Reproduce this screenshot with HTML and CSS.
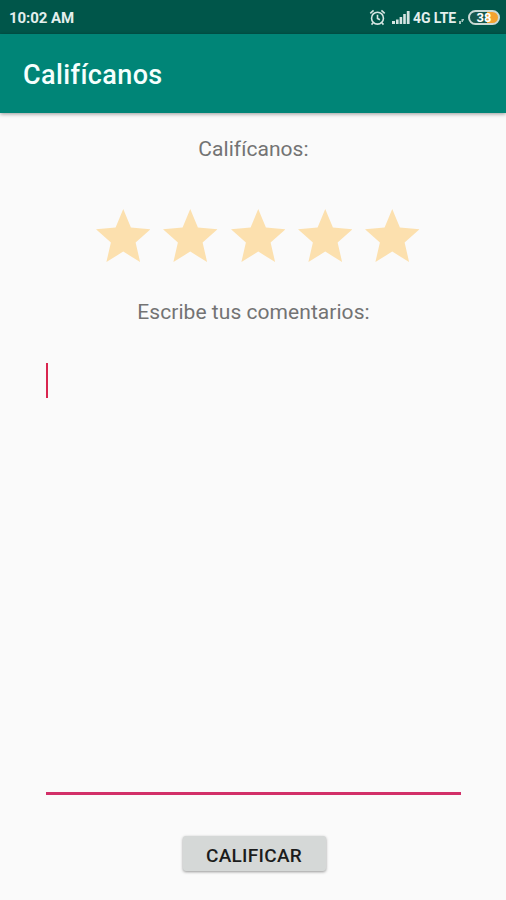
FILE: index.html
```html
<!DOCTYPE html>
<html lang="es">
<head>
<meta charset="utf-8">
<title>Califícanos</title>
<link rel="stylesheet" href="styles.css">
</head>
<body>
<svg class="defs" aria-hidden="true"><symbol id="star" viewBox="2 2 20 19" preserveAspectRatio="none"><path d="M12 17.27 18.18 21l-1.64-7.03L22 9.24l-7.19-.61L12 2 9.19 8.63 2 9.24l5.46 4.73L5.82 21z"/></symbol></svg>
<div class="screen">
  <div class="status">
    <span class="time">10:02 AM</span>
    <svg class="alarm" viewBox="0 0 16 16"><circle cx="8" cy="8.6" r="5.6"/><path d="M8 5.3v3.6l2.3 1.2M1.2 4.1 4.3 1.3M14.8 4.1l-3.1-2.8M3.8 13l-1.4 1.7M12.2 13l1.4 1.7"/></svg>
    <svg class="signal" viewBox="0 0 18 13"><path d="M0 13v-3h3v3zM4 13V8.500h2.600v4.500zM7.600 13V6h2.600v7zM11.200 13V3h2.600v10zM14.800 13V0h2.800v13z"/></svg>
    <span class="network">4G LTE</span>
    <svg class="activity" viewBox="0 0 5 5"><path d="M0 2h2v3H0zM2.500 0H5v1.500H4V3H2.500z"/></svg>
    <div class="battery"><span>38</span></div>
  </div>
  <header class="appbar"><h1>Califícanos</h1></header>
  <main>
    <p class="label rate-label">Califícanos:</p>
    <div class="stars">
      <svg><use href="#star"/></svg>
      <svg><use href="#star"/></svg>
      <svg><use href="#star"/></svg>
      <svg><use href="#star"/></svg>
      <svg><use href="#star"/></svg>
    </div>
    <p class="label comment-label">Escribe tus comentarios:</p>
    <div class="comments"><span class="caret"></span></div>
    <button class="submit" type="button">CALIFICAR</button>
  </main>
</div>
</body>
</html>
```
FILE: styles.css
```css
* { box-sizing: border-box; }
body { margin: 0; background: #fafafa; font-family: Roboto, sans-serif; }
.defs { position: absolute; width: 0; height: 0; }
.screen { width: 506px; height: 900px; display: flex; flex-direction: column; overflow: hidden; }
.status { height: 34px; flex: none; padding: 1px 6px 0 9px; display: flex; align-items: center; background: #00564a; color: #e4efed; font-size: 15px; font-weight: 700; }
.time { margin-right: auto; letter-spacing: -.05px; }
.alarm { width: 17px; height: 17px; margin-right: 6px; fill: none; stroke: #d5e5e2; stroke-width: 1.5; }
.signal { width: 18px; height: 13px; margin-right: 3px; fill: #d5e5e2; }
.network { width: 46px; font-size: 14px; letter-spacing: -.1px; white-space: nowrap; }
.activity { width: 5px; height: 5px; margin: 7px 4px 0 0; fill: #a3c5be; }
.battery { width: 32px; height: 15px; border: 2px solid #cadad6; border-radius: 8px; background: linear-gradient(90deg, #16594e 62%, #f3a32f 62%); display: flex; justify-content: center; align-items: center; color: #fff; font-size: 13px; line-height: 11px; }
.appbar { height: 79px; flex: none; padding: 2px 23px 0; display: flex; align-items: center; background: #008577; box-shadow: 0 1px 4px rgba(0, 0, 0, .4); }
h1 { margin: 0; color: #f5fffd; font-size: 27px; font-weight: 500; line-height: 32px; letter-spacing: .38px; }
main { flex: 1; display: flex; flex-direction: column; align-items: center; }
.label { margin: 0 0 0 1px; color: #737373; font-size: 21px; line-height: 26px; letter-spacing: .05px; white-space: nowrap; }
.rate-label { margin-top: 23px; }
.stars { margin: 47px 0 0 9.500px; display: flex; gap: 12.900px; }
.stars svg { width: 54.500px; height: 53px; fill: #fce0ae; }
.comment-label { margin-top: 37px; }
.comments { width: 415px; height: 432px; margin: 38px 0 0 1px; border-bottom: 3px solid #d22f68; }
.caret { display: block; width: 2px; height: 35px; background: #d9254f; }
.submit { width: 143px; height: 35px; margin: 41px 0 0 2px; padding: 4px 0 0; border: 0; border-radius: 3px; background: #d5d8d7; box-shadow: 0 1px 3px rgba(0, 0, 0, .4); color: #1c1c1c; font: 500 19px/24px Roboto, sans-serif; letter-spacing: .3px; }
```
